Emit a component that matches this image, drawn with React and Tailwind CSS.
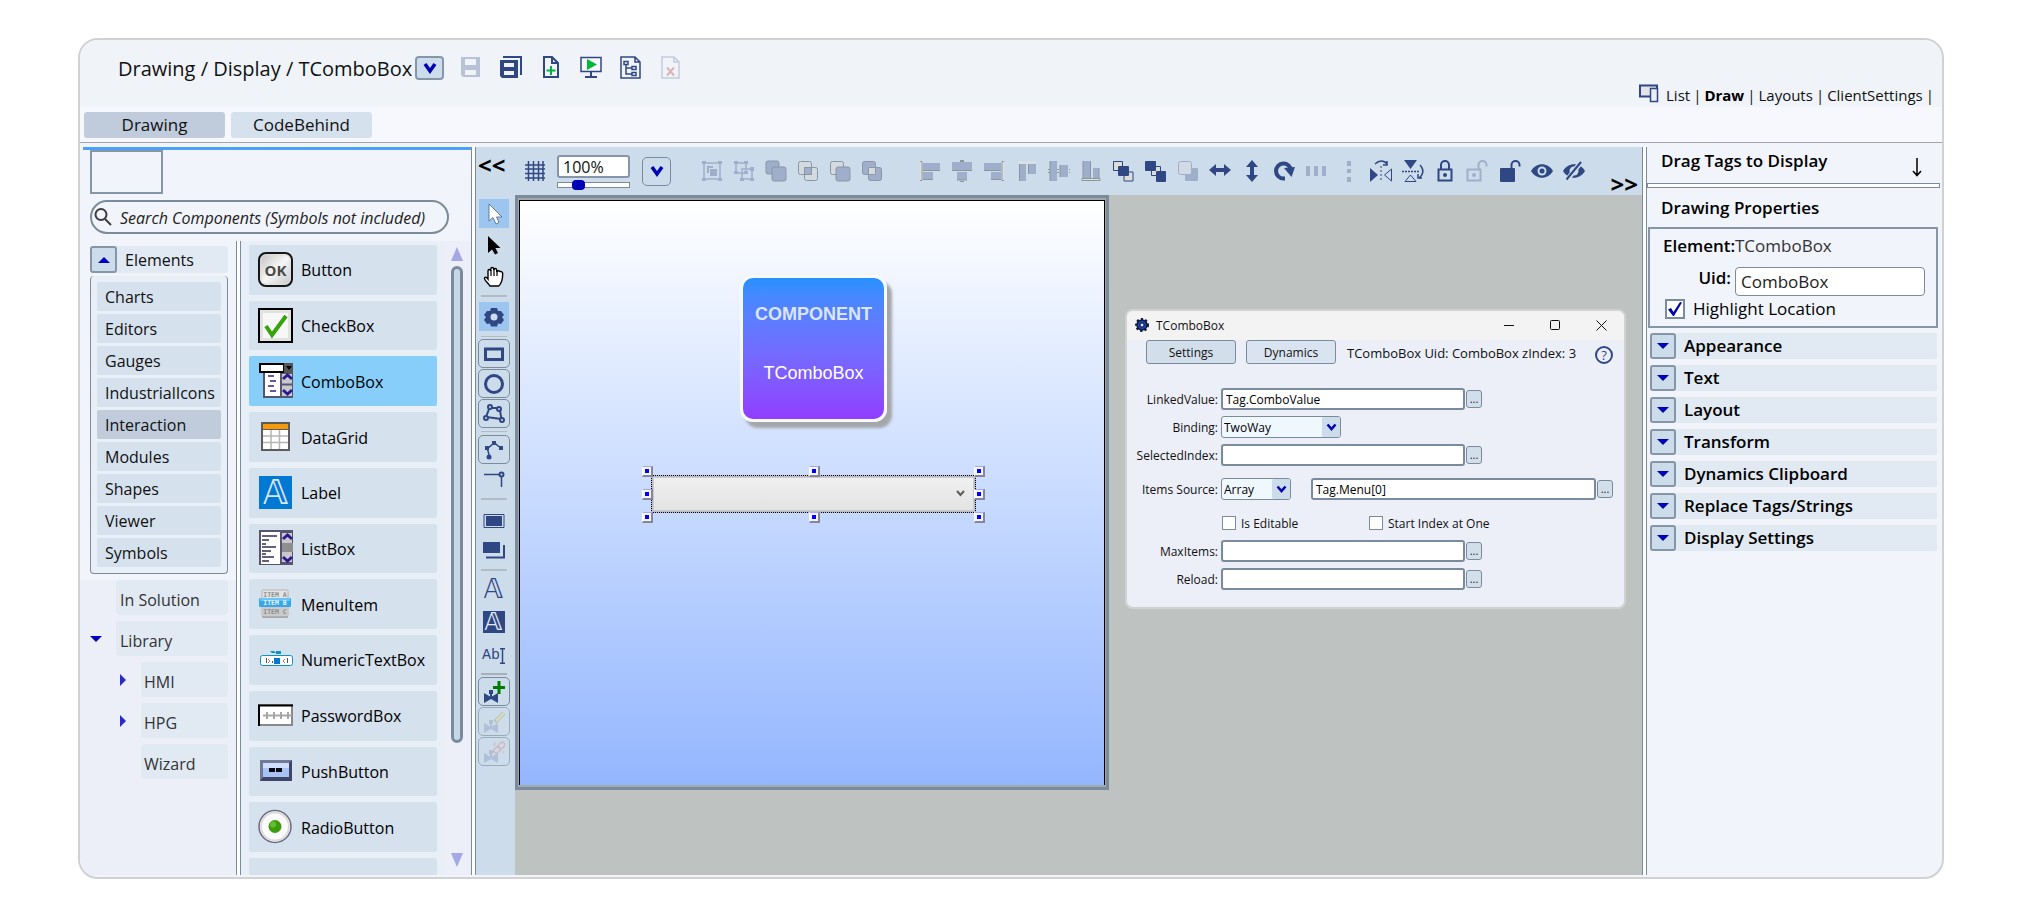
import React, { useState } from 'react';

const navy = '#2f4783';
const dim = '#9fafcb';

function Svg({ w = 22, h = 22, label, className = '', children }) {
    return (
        <svg width={w} height={h} viewBox={`0 0 ${w} ${h}`} fill="none" className={`shrink-0 ${className}`} role={label ? 'img' : undefined} aria-label={label} aria-hidden={label ? undefined : true}>
            {children}
        </svg>
    );
}

function Chevron({ className = '' }) {
    return (
        <Svg w={14} h={12} className={className}>
            <path d="M2 2l5 7 5-7" stroke="#0000b4" strokeWidth="3.500" />
        </Svg>
    );
}

function Valve({ color }) {
    return <path d="M1 13l6 3.500V14H6v-4h4v4H9v2.500l6-3.500v10l-7-4-7 4z" fill={color} />;
}

/* ---------- header icons ---------- */

const headerActions = [
    {
        name: 'Save',
        icon: (
            <Svg w={22} h={24}>
                <path d="M1 2h19v20H3l-2-2zM5 4v6h11V4zM5 15v5h11v-5z" fill="#b8c2d6" fillRule="evenodd" />
            </Svg>
        ),
    },
    {
        name: 'Save all',
        icon: (
            <Svg w={22} h={24}>
                <path d="M3 2h18v18" stroke={navy} strokeWidth="2" />
                <path d="M0 5h18v18H2l-2-2zM4 8v4h10V8zM4 16v4h10v-4z" fill={navy} fillRule="evenodd" />
            </Svg>
        ),
    },
    {
        name: 'New document',
        icon: (
            <Svg w={22} h={24}>
                <path d="M4 2h8l6 6v14H4z M12 2v6h6" stroke={navy} strokeWidth="2" />
                <path d="M11 11v9M6.500 15.500h9" stroke="#00b33c" strokeWidth="2" />
            </Svg>
        ),
    },
    {
        name: 'Run display',
        icon: (
            <Svg w={22} h={24}>
                <path d="M1 2.500h20v14H1z" stroke={navy} strokeWidth="1.500" fill="#f6f8fc" />
                <path d="M7 4l10 5.500L7 15z" fill="#00b83a" />
                <path d="M11 17v4M5 22h12" stroke={navy} strokeWidth="2" />
            </Svg>
        ),
    },
    {
        name: 'Object tree',
        icon: (
            <Svg w={22} h={24}>
                <path d="M1 2h14l5 5v16H1z M15 2v5h5" stroke={navy} strokeWidth="1.500" />
                <path d="M4 6.500h4v3H4zM12 11.500h4v3h-4zM12 17.500h4v3h-4zM6 10v9h6M6 13h6" stroke={navy} strokeWidth="1.500" />
            </Svg>
        ),
    },
    {
        name: 'Delete document',
        icon: (
            <Svg w={22} h={24}>
                <path d="M2 2h12l5 5v16H2z M14 2v5h5" stroke="#c3cbdc" strokeWidth="1.500" />
                <path d="M7 12.500l7 8M14 12.500l-7 8" stroke="#dfb0b8" strokeWidth="2" />
            </Svg>
        ),
    },
];

/* ---------- top toolbar icons ---------- */

const overlap = '#8a96a6';
const booleanTools = [
    {
        name: 'Group',
        icon: (
            <>
                <path d="M3 3h16v16H3z" stroke={dim} strokeWidth="1.500" />
                <path d="M1 1h4v3H1zM17 1h4v3h-4zM1 18h4v3H1zM17 18h4v3h-4z" fill={dim} />
                <path d="M6 6h6v2H8v5H6zM9 9h7v7H9z" fill={dim} />
            </>
        ),
    },
    {
        name: 'Ungroup',
        icon: (
            <>
                <path d="M3 3h10v10H3zM9 9h10v10H9z" stroke={dim} strokeWidth="1.500" />
                <path d="M1 1h4v3H1zM11 1h4v3h-4zM1 11h4v3H1zM17 7h4v4h-4zM7 18h4v3H7zM17 18h4v3h-4zM11 11h4v3h-4z" fill={dim} />
            </>
        ),
    },
    {
        name: 'Union',
        icon: (
            <>
                <rect x="1" y="1" width="13" height="13" rx="2" fill={dim} stroke={overlap} />
                <rect x="7" y="7" width="14" height="14" rx="2" fill={dim} stroke={overlap} />
            </>
        ),
    },
    {
        name: 'Intersect',
        icon: (
            <>
                <rect x="1.500" y="1.500" width="13" height="13" rx="2" fill="#d3dae0" stroke={overlap} />
                <rect x="7.500" y="7.500" width="13" height="13" rx="2" fill="#d3dae0" stroke={overlap} />
                <rect x="7.500" y="7.500" width="7" height="7" fill={dim} stroke={overlap} />
            </>
        ),
    },
    {
        name: 'Exclude',
        icon: (
            <>
                <rect x="1.500" y="1.500" width="13" height="13" rx="2" fill="#d3dae0" stroke={overlap} />
                <rect x="7" y="7" width="14" height="14" rx="2" fill={dim} stroke={overlap} />
            </>
        ),
    },
    {
        name: 'Xor',
        icon: (
            <>
                <rect x="1.500" y="1.500" width="13" height="13" rx="2" fill={dim} stroke={overlap} />
                <rect x="7.500" y="7.500" width="13" height="13" rx="2" fill={dim} stroke={overlap} />
                <rect x="7.500" y="7.500" width="7" height="7" rx="1" fill="#d3dae0" stroke={overlap} />
            </>
        ),
    },
];

const arrangeTools = [
    {
        name: 'Align left',
        icon: (
            <>
                <path d="M1 1.500h2v19H1" stroke="#8b9698" fill="#dde1e4" />
                <path d="M4 3h17v7H4zM4 12h10v7H4z" fill={dim} />
                <path d="M4 10.500h17M4 19.500h10" stroke="#8b9698" />
            </>
        ),
    },
    {
        name: 'Align center',
        icon: (
            <>
                <path d="M11 0v22" stroke="#8b9698" strokeWidth="4" strokeDasharray="2 1" />
                <path d="M1 2h20v8H1zM6 12h10v8H6z" fill={dim} />
                <path d="M1 10.500h20M6 20h10" stroke="#8b9698" />
            </>
        ),
    },
    {
        name: 'Align right',
        icon: (
            <>
                <path d="M21 1.500h-2v19h2" stroke="#8b9698" fill="#dde1e4" />
                <path d="M1 3h17v7H1zM8 12h10v7H8z" fill={dim} />
                <path d="M1 10.500h17M8 19.500h10" stroke="#8b9698" />
            </>
        ),
    },
    {
        name: 'Align top',
        icon: (
            <>
                <path d="M2 1.500h18v2H2z" fill="#dde1e4" />
                <path d="M4 4h6v17H4zM13 4h7v10h-7z" fill={dim} />
                <path d="M3.500 4v17M12.500 4v10" stroke="#8b9698" />
            </>
        ),
    },
    {
        name: 'Align middle',
        icon: (
            <>
                <path d="M0 9.500h22M0 12.500h22" stroke="#8b9698" strokeDasharray="2 1" />
                <path d="M2 1h7v20H2zM12 5h8v12h-8z" fill={dim} />
                <path d="M2 1v20M12 5v12" stroke="#8b9698" />
            </>
        ),
    },
    {
        name: 'Align bottom',
        icon: (
            <>
                <path d="M2 18.500h18v2H2z" fill="#dde1e4" stroke="#8b9698" />
                <path d="M3 1h7v17H3zM13 8h6v10h-6z" fill={dim} />
                <path d="M10.500 1v17M19 8v10M3 1v17" stroke="#8b9698" />
            </>
        ),
    },
    {
        name: 'Bring to front',
        icon: (
            <>
                <path d="M1.500 1.500h9v9h-9zM12 12h9v9h-9z" fill="#dcdcd8" stroke={navy} />
                <rect x="6" y="6" width="11" height="10" rx="1" fill={navy} />
            </>
        ),
    },
    {
        name: 'Send to back',
        icon: (
            <>
                <path d="M7.500 6.500h9v9h-9z" fill="#dcdcd8" stroke={navy} />
                <rect x="1" y="1" width="11" height="10" rx="1" fill={navy} />
                <rect x="12" y="11" width="10" height="11" rx="1" fill={navy} />
            </>
        ),
    },
    {
        name: 'Send backward',
        icon: (
            <>
                <rect x="8" y="8" width="13" height="13" rx="1" fill={dim} />
                <rect x="1.500" y="1.500" width="13" height="13" rx="2" fill="#d3dae3" stroke={dim} />
            </>
        ),
    },
    { name: 'Same width', icon: <path d="M0 10l7-6v4h8V4l7 6-7 6v-4H7v4z" fill={navy} /> },
    { name: 'Same height', icon: <path d="M11 0l6 7h-4v8h4l-6 7-6-7h4V7H5z" fill={navy} /> },
    {
        name: 'Rotate',
        icon: (
            <>
                <path d="M12 18.500h-1.500a7.500 7.500 0 1 1 7.500-8" stroke={navy} strokeWidth="4" />
                <path d="M11 8l11-1-3.500 10z" fill={navy} />
            </>
        ),
    },
    { name: 'Space horizontally', icon: <path d="M1 6h4v10H1zM9 6h4v10H9zM17 6h4v10h-4z" fill={dim} /> },
    { name: 'Space vertically', icon: <path d="M9 1h4v5H9zM9 9h4v4H9zM9 17h4v5H9z" fill={dim} /> },
    {
        name: 'Flip horizontally',
        icon: (
            <>
                <path d="M11 6v16" stroke={navy} strokeDasharray="2 2" />
                <path d="M0 8l8 7-8 7z" fill={navy} />
                <path d="M21.500 9v12L14.500 15z" stroke={navy} />
                <path d="M5 4c4-4 9-4 12 0M17 1v4h-4" stroke={navy} strokeWidth="1.500" />
            </>
        ),
    },
    {
        name: 'Flip vertically',
        icon: (
            <>
                <path d="M0 11.500h17" stroke={navy} strokeWidth="1.500" strokeDasharray="2 1" />
                <path d="M2 0h13L8.500 9z" fill={navy} />
                <path d="M3 21.500h11L8.500 15z" stroke={navy} />
                <path d="M18 5c4 4 4 9-1 13M16 14v4h4" stroke={navy} strokeWidth="1.500" />
            </>
        ),
    },
    {
        name: 'Lock',
        icon: (
            <>
                <path d="M4.500 9.500h13v11h-13z" stroke={navy} strokeWidth="2" />
                <path d="M7 9V5a4 4 0 0 1 8 0v4" stroke={navy} strokeWidth="2" />
                <circle cx="11" cy="15" r="2" fill={navy} />
            </>
        ),
    },
    {
        name: 'Unlock',
        icon: (
            <>
                <path d="M1.500 9.500h13v11h-13z" stroke={dim} strokeWidth="2" />
                <path d="M12.500 9V5a4 4 0 0 1 8 0v1.500" stroke={dim} strokeWidth="2" />
                <circle cx="8" cy="15" r="2" fill={dim} />
            </>
        ),
    },
    {
        name: 'Unlock all',
        icon: (
            <>
                <rect x="1" y="8" width="15" height="14" rx="1" fill={navy} />
                <path d="M12.500 9V5a4 4 0 0 1 8 0v1.500" stroke={navy} strokeWidth="2" />
            </>
        ),
    },
    {
        name: 'Show',
        icon: (
            <>
                <path d="M0 11c5-9 17-9 22 0-5 9-17 9-22 0z" fill={navy} />
                <circle cx="11" cy="11" r="4.500" fill="#cddceb" />
                <circle cx="11" cy="11" r="2.500" fill={navy} />
            </>
        ),
    },
    {
        name: 'Hide',
        icon: (
            <>
                <path d="M0 11c5-9 17-9 22 0-5 9-17 9-22 0z" fill={navy} />
                <circle cx="11" cy="11" r="4.500" fill="#cddceb" />
                <path d="M4 20L18 2" stroke="#cddceb" strokeWidth="5" />
                <path d="M3.500 19.500L18 2" stroke={navy} strokeWidth="2" />
            </>
        ),
    },
];

/* ---------- component palette icons ---------- */

const palette = [
    {
        name: 'Button',
        icon: (
            <Svg w={35} h={35}>
                <defs>
                    <linearGradient id="metal" x1="0" y1="0" x2="1" y2="1">
                        <stop offset="0" stopColor="#bdbdbd" />
                        <stop offset=".5" stopColor="#f6f6f6" />
                        <stop offset="1" stopColor="#c4c4c4" />
                    </linearGradient>
                </defs>
                <rect x="1" y="1" width="33" height="33" rx="7" fill="url(#metal)" stroke="#161616" strokeWidth="2" />
                <rect x="3" y="3" width="29" height="29" rx="5" stroke="#dedede" />
                <text x="17.500" y="23.500" textAnchor="middle" fontFamily="Open Sans" fontWeight="700" fontSize="15" fill="#4a4a4a">OK</text>
            </Svg>
        ),
    },
    {
        name: 'CheckBox',
        icon: (
            <Svg w={35} h={35}>
                <rect x="1" y="1" width="33" height="33" fill="#e2e2e2" stroke="#000" strokeWidth="2" />
                <path d="M5 5h25v25H5z" fill="#f7f7f7" />
                <path d="M8 18l6 9L28 8" stroke="#36a20c" strokeWidth="4" />
            </Svg>
        ),
    },
    {
        name: 'ComboBox',
        icon: (
            <Svg w={35} h={35}>
                <path d="M6 9h18v25H6z" fill="#fff" stroke="#57546e" strokeWidth="2" />
                <path d="M23 10h12v24H23z" fill="#c9c9cd" stroke="#57546e" strokeWidth="2" />
                <path d="M23 21.500h12" stroke="#57546e" strokeWidth="2" />
                <path d="M25 16l4.500-4 4.500 4M25 27l4.500 4 4.500-4" stroke="#2c1a8c" strokeWidth="3" />
                <path d="M10 13h6M12 18h6M10 23h6M12 28h6" stroke="#6557a4" strokeWidth="2" />
                <path d="M2 1h24v8H2z" fill="#fff" stroke="#000" strokeWidth="2" />
                <path d="M26 0h9v10h-9z" fill="#555" />
                <path d="M28 3h6l-3 4z" fill="#000" />
            </Svg>
        ),
    },
    {
        name: 'DataGrid',
        icon: (
            <Svg w={35} h={35}>
                <path d="M4 4h27v27H4z" fill="#fff" stroke="#5c5c5c" strokeWidth="2" />
                <path d="M5 5h25v5H5z" fill="#f79a0a" />
                <path d="M5 10.500h25" stroke="#5c5c5c" />
                <path d="M13 11v19M21.500 11v19M5 17h25M5 23.500h25" stroke="#b5b5b5" strokeWidth="1.500" />
            </Svg>
        ),
    },
    {
        name: 'Label',
        icon: (
            <span aria-hidden="true" className="flex size-[33px] items-center justify-center bg-[#0078d4] font-['DejaVu_Sans',sans-serif] text-[34px] leading-none text-[#dbe6f5]">𝔸</span>
        ),
    },
    {
        name: 'ListBox',
        icon: (
            <Svg w={35} h={35}>
                <path d="M2 1h33v34H2z" fill="#fff" stroke="#57546e" strokeWidth="2" />
                <path d="M23 2h12v31H23z" fill="#c9c9cd" stroke="#57546e" strokeWidth="2" />
                <path d="M24 13h11v9H24z" fill="#8e8e8e" />
                <path d="M25 9l4.500-4L34 9M25 27l4.500 4 4.500-4" stroke="#2c1a8c" strokeWidth="3" />
                <path d="M4 6h15M4 10h7M4 14h4M4 17h14M4 21h9M4 24h4M4 27h12M4 31h7" stroke="#65617a" strokeWidth="2" />
            </Svg>
        ),
    },
    {
        name: 'MenuItem',
        icon: (
            <Svg w={35} h={35}>
                <rect x="4" y="6" width="26" height="26" rx="1" fill="#a8a8a8" />
                <rect x="4" y="4" width="26" height="26" rx="1" fill="#e4e4e4" stroke="#b4b4b4" />
                <rect x="4" y="21" width="26" height="9" fill="#cacaca" />
                <rect x="1" y="12" width="32" height="9" rx="1" fill="#37a7ea" />
                <rect x="2" y="12" width="30" height="3" fill="#6cc4f6" />
                <g fontFamily="DejaVu Sans Mono" fontWeight="700" fontSize="6.500" textAnchor="middle">
                    <text x="17" y="11" fill="#8d8d8d">ITEM A</text>
                    <text x="17" y="19" fill="#e4f4ff">ITEM B</text>
                    <text x="17" y="28" fill="#8d8d8d">ITEM C</text>
                </g>
            </Svg>
        ),
    },
    {
        name: 'NumericTextBox',
        icon: (
            <Svg w={35} h={35}>
                <rect x="2.500" y="13.500" width="32" height="10" rx="2" fill="#fff" stroke="#0a93c4" />
                <path d="M12 9h4l2 2h-4zM18 9h5v3h-5z" fill="#0a93c4" />
                <path d="M16 16h6v6h-6z" fill="#0078d4" />
                <path d="M8.500 16v5M14.500 19v2M29.500 16v5" stroke="#555" />
                <path d="M10 17l2 2-2 2M27 17l-2 2 2 2" stroke="#888" />
            </Svg>
        ),
    },
    {
        name: 'PasswordBox',
        icon: (
            <Svg w={35} h={35}>
                <path d="M1 7h33v20H1z" fill="#fff" stroke="#8a8a8a" strokeWidth="2" />
                <path d="M1 28V7.500H35" stroke="#000" strokeWidth="2" />
                <path d="M5 17.500h29" stroke="#a6a6a6" strokeWidth="2" />
                <path d="M9 14v7M16 14v7M23 14v7M30 14v7" stroke="#a6a6a6" strokeWidth="2" />
            </Svg>
        ),
    },
    {
        name: 'PushButton',
        icon: (
            <Svg w={35} h={35}>
                <path d="M2 7h32v21H2z" fill="#3e4569" />
                <path d="M2 7h32l-3 3H5v14l-3 4z" fill="#73789b" />
                <path d="M5 10h26v14H5z" fill="#a9c2f6" />
                <path d="M5 10h26v5H5z" fill="#d0defb" />
                <path d="M11 15h6v4h-6zM18 15h6v4h-6z" fill="#0a0a14" />
            </Svg>
        ),
    },
    {
        name: 'RadioButton',
        icon: (
            <Svg w={35} h={35}>
                <circle cx="17" cy="17.500" r="16" fill="#fbfbfb" stroke="#6b6b80" strokeWidth="1.500" />
                <circle cx="17" cy="17.500" r="14" stroke="#dcdcdc" strokeWidth="2" />
                <circle cx="17" cy="17.500" r="6.500" fill="#3c9c0c" />
                <circle cx="15" cy="15.500" r="3" fill="#62bf30" />
            </Svg>
        ),
    },
];

const categories = ['Charts', 'Editors', 'Gauges', 'IndustrialIcons', 'Interaction', 'Modules', 'Shapes', 'Viewer', 'Symbols'];

const sections = ['Appearance', 'Text', 'Layout', 'Transform', 'Dynamics Clipboard', 'Replace Tags/Strings', 'Display Settings'];

/* ---------- header ---------- */

function Header() {
    return (
        <header>
            <div className="flex h-[67px] bg-[#f0f4f9] pl-[38px]">
                <div className="flex h-14 items-center">
                    <h1 className="w-[297px] pt-px whitespace-nowrap text-[20px] text-[#111]">Drawing / Display / TComboBox</h1>
                    <button type="button" aria-label="Choose display" className="flex h-6 w-[29px] items-center justify-center rounded border-2 border-[#8496a8] bg-[#cddceb]">
                        <Chevron />
                    </button>
                    <div className="ml-4 flex gap-[18px] pb-[2px]">
                        {headerActions.map(a => (
                            <button key={a.name} type="button" aria-label={a.name}>{a.icon}</button>
                        ))}
                    </div>
                </div>
                <nav className="ml-auto flex items-center gap-[3px] self-end pr-2 text-[15px] leading-4 whitespace-nowrap text-[#111]">
                    <Svg w={20} h={20} className="mb-1 mr-1">
                        <path d="M1 2.500h17v11H1z" stroke={navy} strokeWidth="2" fill="#e2e4e8" />
                        <path d="M11.500 5.500h7v13h-7z" stroke={navy} strokeWidth="1.500" fill="#eceef2" />
                    </Svg>
                    <a href="#list">List</a>
                    <span>|</span>
                    <a href="#draw" className="font-bold text-black">Draw</a>
                    <span>|</span>
                    <a href="#layouts">Layouts</a>
                    <span>|</span>
                    <a href="#client">ClientSettings</a>
                    <span>|</span>
                </nav>
            </div>
            <div className="flex h-9 items-center gap-[6px] border-b border-[#a3a6a9] bg-[#f6f8fd] pl-1 text-[17px]">
                <button type="button" className="h-[26px] w-[141px] rounded-[3px] bg-[#c0ccdb] leading-[26px]">Drawing</button>
                <button type="button" className="h-[26px] w-[141px] rounded-[3px] bg-[#d6e1ee] leading-[26px]">CodeBehind</button>
            </div>
        </header>
    );
}

/* ---------- left panel ---------- */

function Splitter() {
    return <div className="w-[5px] shrink-0 border-x border-[#7a8b9c] bg-white" />;
}

function Triangle({ dir, className = '' }) {
    const paths = { up: 'M0 6L6 0l6 6z', down: 'M0 0h12L6 6z' };
    return (
        <Svg w={12} h={6} className={className}>
            <path d={paths[dir]} fill="#0000c0" />
        </Svg>
    );
}

function Tree({ category, onSelect }) {
    return (
        <div className="flex w-[156px] shrink-0 flex-col text-[16px] whitespace-nowrap">
            <div className="pl-[10px] pr-2 pt-[5px]">
                <div className="flex items-center rounded-[3px] bg-[#e1e9f3]">
                    <button type="button" aria-label="Collapse elements" className="flex size-[27px] items-center justify-center rounded-[3px] border-2 border-[#8496a8] bg-[#cddceb]">
                        <Triangle dir="up" />
                    </button>
                    <span className="pl-2 leading-6">Elements</span>
                </div>
                <ul className="mt-[3px] flex flex-col gap-[3px] rounded-[4px] border border-t-0 border-[#7a8b9c] bg-[#e8eff7] px-[6px] py-[6px]">
                    {categories.map(c => (
                        <li key={c}>
                            <button
                                type="button"
                                onClick={() => onSelect(c)}
                                className={`h-[29px] w-full rounded-[2px] pl-2 text-left leading-[30px] ${c === category ? 'bg-[#c0ccdb]' : 'bg-[#d6e1ee]'}`}
                            >
                                {c}
                            </button>
                        </li>
                    ))}
                </ul>
            </div>
            <ul className="mt-[6px] flex flex-1 flex-col gap-[6px] bg-[#eceff8] pr-2 text-[#333] *:flex *:items-center">
                <li className="pl-9">
                    <a href="#solution" className="h-[35px] flex-1 rounded-[4px] bg-[#e1e9f3] pl-1 leading-10">In Solution</a>
                </li>
                <li className="pl-[10px]">
                    <Triangle dir="down" className="mr-[14px]" />
                    <a href="#library" className="h-[35px] flex-1 rounded-[4px] bg-[#e1e9f3] pl-1 leading-10">Library</a>
                </li>
                {['HMI', 'HPG'].map(n => (
                    <li key={n} className="pl-10">
                        <Svg w={6} h={12} className="mr-[15px]">
                            <path d="M0 0l6 6-6 6z" fill="#2a2ac8" />
                        </Svg>
                        <a href={`#${n}`} className="h-[35px] flex-1 rounded-[4px] bg-[#e1e9f3] pl-[3px] leading-10">{n}</a>
                    </li>
                ))}
                <li className="pl-[61px]">
                    <a href="#wizard" className="h-[35px] flex-1 rounded-[4px] bg-[#e1e9f3] pl-[3px] leading-10">Wizard</a>
                </li>
            </ul>
        </div>
    );
}

function ComponentPanel() {
    const [category, setCategory] = useState('Interaction');
    const [selected, setSelected] = useState('ComboBox');

    return (
        <aside className="flex w-[391px] shrink-0 flex-col">
            <div className="ml-[3px] h-[3px] shrink-0 bg-[#4aa0fb]" />
            <div className="ml-[10px] h-11 w-[73px] shrink-0 border-2 border-[#8496a8]" />
            <label className="ml-[10px] mr-[22px] mt-[6px] flex h-[34px] shrink-0 items-center rounded-[17px] border-2 border-[#7a8b9c] pl-[2px]">
                <Svg w={18} h={20}>
                    <circle cx="7" cy="7.500" r="5.500" stroke="#3c3c3c" strokeWidth="2" />
                    <path d="M11 12l6 6" stroke="#3c3c3c" strokeWidth="2" />
                </Svg>
                <input type="text" aria-label="Search components" placeholder="Search Components (Symbols not included)" className="ml-2 min-w-0 flex-1 bg-transparent pt-px text-[16px] italic outline-none placeholder:text-[#222]" />
            </label>
            <div className="mt-[7px] flex min-h-0 flex-1">
                <Tree category={category} onSelect={setCategory} />
                <Splitter />
                <ul className="grid flex-1 grid-rows-[repeat(11,minmax(0,1fr))_17px] gap-y-[6px] bg-[#e8eff7] pl-2 pr-[7px] pt-1">
                    {palette.map(p => (
                        <li key={p.name}>
                            <button
                                type="button"
                                onClick={() => setSelected(p.name)}
                                className={`flex h-full w-full items-center rounded-[2px] pb-px pl-[9px] text-[16px] text-black ${p.name === selected ? 'bg-[#87cefa]' : 'bg-[#d6e1ee]'}`}
                            >
                                <span className="flex w-[35px] justify-center">{p.icon}</span>
                                <span className="ml-2 mt-[2px]">{p.name}</span>
                            </button>
                        </li>
                    ))}
                    <li className="rounded-[2px] bg-[#d6e1ee]" />
                </ul>
                <div className="flex w-[27px] shrink-0 flex-col items-center bg-[#eceff8] pb-2 pr-[2px] pt-[6px]">
                    <Svg w={12} h={14}>
                        <path d="M6 0l6 14H0z" fill="#a6a8e6" />
                    </Svg>
                    <div className="mt-[5px] h-[77%] w-3 rounded-full border-[3px] border-[#7a8b9c] bg-[#c6d7e8]" />
                    <Svg w={12} h={14} className="mt-auto">
                        <path d="M6 14L0 0h12z" fill="#a6a8e6" />
                    </Svg>
                </div>
            </div>
        </aside>
    );
}

/* ---------- drawing area ---------- */

function TopToolbar() {
    const [zoom, setZoom] = useState(24);

    return (
        <div className="flex h-12 shrink-0 items-center bg-[#cddceb]">
            <button type="button" aria-label="Collapse left panel" className="w-[49px] self-start pl-[2px] text-left text-[24px] font-bold leading-9 text-black">&lt;&lt;</button>
            <button type="button" aria-label="Toggle grid" className="mr-3">
                <Svg w={20} h={20}>
                    <path d="M3.500 0v20M8.500 0v20M13.500 0v20M18 0v20M0 4h20M0 8h20M0 12.500h20M0 17h20" stroke={navy} strokeWidth="1.500" />
                </Svg>
            </button>
            <div className="mr-3 flex w-[73px] flex-col gap-1 pt-px">
                <input type="text" aria-label="Zoom" defaultValue="100%" className="h-[23px] w-full rounded-[3px] border-2 border-[#8496a8] bg-white px-1 text-[16px] leading-5" />
                <input
                    type="range"
                    aria-label="Zoom level"
                    value={zoom}
                    onChange={e => setZoom(e.target.value)}
                    className="h-[6px] w-full appearance-none border border-[#7a8b9c] bg-white [&::-webkit-slider-thumb]:h-[10px] [&::-webkit-slider-thumb]:w-[13px] [&::-webkit-slider-thumb]:appearance-none [&::-webkit-slider-thumb]:rounded-[4px] [&::-webkit-slider-thumb]:bg-[#0000b8]"
                />
            </div>
            <button type="button" aria-label="Zoom presets" className="flex h-[29px] w-[29px] items-center justify-center rounded-[5px] border border-[#7a8b9c] bg-[#cddceb]">
                <Chevron />
            </button>
            <div className="ml-[25px] flex">
                {booleanTools.map(t => (
                    <button key={t.name} type="button" aria-label={t.name} className="flex w-8 justify-center">
                        <Svg>{t.icon}</Svg>
                    </button>
                ))}
            </div>
            <div className="ml-[26px] grid w-[676px] grid-flow-col auto-cols-fr">
                {arrangeTools.map(t => (
                    <button key={t.name} type="button" aria-label={t.name} className="flex justify-center">
                        <Svg>{t.icon}</Svg>
                    </button>
                ))}
            </div>
            <button type="button" aria-label="Collapse right panel" className="ml-auto self-end pr-1 text-[24px] font-bold leading-[22px] text-black">&gt;&gt;</button>
        </div>
    );
}

function Tool({ name, active, boxed, faded, children }) {
    let look = 'h-[30px] w-[30px]';
    if (active) look = 'h-[29px] w-[30px] bg-[#9cc5f0]';
    if (boxed) look = 'mb-px h-[29px] w-8 rounded-[5px] border border-[#7a8b9c]';
    return (
        <button type="button" aria-label={name} className={`flex shrink-0 items-center justify-center ${look} ${faded ? 'opacity-60' : ''}`}>
            {children}
        </button>
    );
}

function Separator() {
    return <div className="my-[3px] h-[2px] w-[26px] shrink-0 bg-[#b3bcc5]" />;
}

function ToolColumn() {
    return (
        <div className="flex w-[39px] shrink-0 flex-col items-center bg-[#cddceb] pr-1 pt-1">
            <Tool name="Select" active>
                <Svg>
                    <path d="M6 1v17l4-3.500 3 6.500 3-1.500-2.500-5.500h5.500z" fill="#fff" stroke="#4d6280" strokeWidth=".8" />
                </Svg>
            </Tool>
            <div className="h-[2px] shrink-0" />
            <Tool name="Direct select">
                <Svg>
                    <path d="M5 2v17l4-3.500 3 5 3-1.500-2.500-5h5z" fill="#000" />
                </Svg>
            </Tool>
            <div className="h-[2px] shrink-0" />
            <Tool name="Pan">
                <Svg>
                    <path d="M7 20c-2-3-6-6-5.500-8 .5-1.500 2.500-.5 3.500 1V5c0-2 2.500-2 2.700 0V3c.3-2 2.700-2 3 0v1c.3-2 2.800-2 3 0v2c.5-2 3-1.500 3 0 .5-1 3-.5 3 1.500 0 5-.5 9.500-4 12.500z" fill="#fff" stroke="#000" strokeWidth="1.400" />
                    <path d="M8 4v6M11 3v7M14 4v6" stroke="#000" strokeWidth="1.200" />
                </Svg>
            </Tool>
            <Separator />
            <div className="h-[2px] shrink-0" />
            <Tool name="Settings" active>
                <Svg>
                    <path d="M8 2h6l1 3 3 0 3 4-2 2 2 3-3 4-3-.5-1 3H8l-1-3-3 .5-3-4 2-3-2-2 3-4 3 0z" fill={navy} />
                    <circle cx="11" cy="11" r="3.500" fill="#cddceb" />
                </Svg>
            </Tool>
            <div className="mb-[2px] mt-[5px] h-px w-[26px] shrink-0 bg-[#b3bcc5]" />
            <Tool name="Rectangle" boxed>
                <Svg>
                    <path d="M2.500 6h17v10.500h-17z" stroke={navy} strokeWidth="3" />
                </Svg>
            </Tool>
            <Tool name="Ellipse" boxed>
                <Svg>
                    <circle cx="11" cy="11" r="8.500" stroke={navy} strokeWidth="3" />
                </Svg>
            </Tool>
            <Tool name="Polygon" boxed>
                <Svg>
                    <path d="M6.500 5h10l2 11L3 14z" stroke={navy} strokeWidth="2" />
                    <g fill="#cddceb" stroke={navy} strokeWidth="2">
                        <circle cx="7" cy="4" r="2" />
                        <circle cx="16" cy="6" r="2" />
                        <circle cx="3" cy="15" r="2" />
                        <circle cx="19" cy="17" r="2" />
                    </g>
                </Svg>
            </Tool>
            <div className="mb-[3px] mt-[2px] h-px w-[26px] shrink-0 bg-[#b3bcc5]" />
            <Tool name="Path" boxed>
                <Svg>
                    <path d="M6 18c0-5-1-6-2-9M4 9c4-1 5-4 7-5 3 1 4 4 8 5" stroke={navy} strokeWidth="1.500" />
                    <path d="M2 7h4v4H2zM9 2h4v4H9zM16 7h4v4h-4z" fill={navy} />
                    <circle cx="6" cy="18" r="2.500" fill={navy} />
                </Svg>
            </Tool>
            <Tool name="Line">
                <Svg>
                    <path d="M1 5.500h16M18.500 8v10" stroke={navy} strokeWidth="1.500" />
                    <circle cx="18.500" cy="5.500" r="2" stroke={navy} strokeWidth="2" />
                </Svg>
            </Tool>
            <Separator />
            <div className="h-[3px] shrink-0" />
            <Tool name="Glow rectangle">
                <Svg>
                    <path d="M1 4.500h20v13H1z" stroke={navy} />
                    <path d="M3 6h16v10H3z" fill={navy} />
                </Svg>
            </Tool>
            <Tool name="Shadow rectangle">
                <Svg>
                    <path d="M0 2h17v11H0z" fill={navy} />
                    <path d="M3 17.500h18V5" stroke={navy} strokeWidth="2" />
                </Svg>
            </Tool>
            <Separator />
            <Tool name="Text">
                <span className="font-['DejaVu_Sans',sans-serif] text-[26px] leading-none text-[#2f4783]">𝔸</span>
            </Tool>
            <div className="h-[3px] shrink-0" />
            <Tool name="Filled text">
                <span className="flex size-[22px] items-center justify-center bg-[#2f4783] font-['DejaVu_Sans',sans-serif] text-[24px] leading-none text-[#e3ebf5]">𝔸</span>
            </Tool>
            <div className="h-1 shrink-0" />
            <Tool name="Text box">
                <span className="font-['Liberation_Mono',monospace] text-[15px] text-[#2f4783]">Ab</span>
                <Svg w={5} h={16}>
                    <path d="M0 .8h5M0 15.200h5M2.500 1v14" stroke={navy} strokeWidth="1.500" />
                </Svg>
            </Tool>
            <div className="my-[2px] h-[2px] w-[26px] shrink-0 bg-[#a8b0b8]" />
            <Tool name="Add symbol" boxed>
                <Svg h={24}>
                    <Valve color={navy} />
                    <path d="M16 1v13M10 7.500h12" stroke="#007a00" strokeWidth="3" />
                </Svg>
            </Tool>
            <Tool name="Edit symbol" boxed faded>
                <Svg h={24}>
                    <Valve color={dim} />
                    <path d="M12 12l9-9" stroke="#a4a79a" strokeWidth="4" />
                    <path d="M13 11l8-8" stroke="#e2dc9a" strokeWidth="2.500" />
                </Svg>
            </Tool>
            <Tool name="Unlink symbol" boxed faded>
                <Svg h={24}>
                    <Valve color={dim} />
                    <rect x="-3.500" y="-2.500" width="7" height="5" rx="2.500" stroke="#d8a0a8" strokeWidth="1.500" transform="translate(14 10) rotate(-45)" />
                    <rect x="-3.500" y="-2.500" width="7" height="5" rx="2.500" stroke="#d8a0a8" strokeWidth="1.500" transform="translate(18.500 5.500) rotate(-45)" />
                    <path d="M12 2v3M20 11v2M10 5h2" stroke="#d8a0a8" />
                </Svg>
            </Tool>
        </div>
    );
}

const handles = [
    'left-[-10px] top-[-10px]',
    'left-1/2 -ml-[5px] top-[-10px]',
    'right-[-10px] top-[-10px]',
    'left-[-10px] top-[13px]',
    'right-[-10px] top-[13px]',
    'left-[-10px] bottom-[-11px]',
    'left-1/2 -ml-[5px] bottom-[-11px]',
    'right-[-10px] bottom-[-11px]',
];

function Canvas() {
    return (
        <div className="relative h-[595px] w-[594px] border-[3px] border-[#7a8b9c] bg-[#a2a8ab] px-px pb-[2px] pt-[2px]">
            <div className="h-full border border-b-0 border-black bg-linear-to-b from-white to-[#94b6ff]" />
            <div className="absolute left-[222px] top-[77px] flex size-[147px] flex-col items-center rounded-[13px] border-[3px] border-[#f6f9ff] bg-linear-to-b from-[#2691ff] to-[#903cff] pt-6 font-['Liberation_Sans',Arial,sans-serif] text-[18px] leading-6 shadow-[5px_6px_3px_#a4a6aa]">
                <span className="font-bold text-[#dbe6fd]">COMPONENT</span>
                <span className="mt-[35px] text-white">TComboBox</span>
            </div>
            <div className="absolute left-[133px] top-[277px] h-[38px] w-[325px] border border-dotted border-black bg-[#b9bcc4] p-px">
                <select aria-label="Combo box" className="size-full appearance-none border border-[#c8cacd] bg-linear-to-b from-[#f0f0f0] to-[#e3e3e3]" />
                <Svg w={9} h={7} className="pointer-events-none absolute right-[10px] top-[14px]">
                    <path d="M1 1l3.500 4L8 1" stroke="#5c5c5c" strokeWidth="2" />
                </Svg>
                {handles.map(h => (
                    <span key={h} className={`absolute flex size-[11px] items-center justify-center border-b-2 border-l border-r-2 border-t border-b-[#85859c] border-l-white border-r-[#85859c] border-t-[#a8a8f4] bg-[#f4f4fa] ${h}`}>
                        <span className="size-1 bg-[#0000ff]" />
                    </span>
                ))}
            </div>
        </div>
    );
}

/* ---------- settings window ---------- */

function Field({ id, label, defaultValue }) {
    return (
        <div className="flex items-center">
            <label htmlFor={id} className="w-[90px] pr-[3px] text-right">{label}</label>
            <input id={id} type="text" defaultValue={defaultValue} className="h-[22px] w-[244px] rounded-[3px] border-2 border-[#7a8b9c] bg-white px-[3px] text-black" />
            <MoreButton />
        </div>
    );
}

function MoreButton() {
    return <button type="button" aria-label="Browse tags" className="ml-px h-[18px] w-4 shrink-0 rounded-[3px] border border-[#7a8b9c] bg-[#d3deeb] text-[11px] leading-4">...</button>;
}

function Dropdown({ id, width, options }) {
    return (
        <span className={`relative flex h-[22px] ${width}`}>
            <select id={id} className="w-full appearance-none rounded-[3px] border border-[#7a8b9c] bg-[#f0f8ff] pl-[2px] text-black">
                {options.map(o => (
                    <option key={o}>{o}</option>
                ))}
            </select>
            <span className="pointer-events-none absolute inset-y-px right-px flex w-[18px] items-center justify-center rounded-[2px] bg-[#cddceb]">
                <Svg w={11} h={8}>
                    <path d="M1.500 1.500l4 4.500 4-4.500" stroke="#0000b4" strokeWidth="2.500" />
                </Svg>
            </span>
        </span>
    );
}

function SettingsWindow() {
    return (
        <section aria-label="TComboBox settings" className="absolute right-4 top-[114px] h-[300px] w-[501px] overflow-hidden rounded-[8px] border-2 border-[#d2d2d2] bg-[#eceff8] text-[12px] text-[#111]">
            <div className="flex h-[29px] items-center bg-[#f3f3f3] pb-px pl-2">
                <Svg w={14} h={14}>
                    <circle cx="7" cy="7" r="5" fill="#1a3fae" stroke="#0e1a3c" strokeWidth="1.500" />
                    <circle cx="7" cy="7" r="6" stroke="#0e1a3c" strokeWidth="2" strokeDasharray="2.200 2.200" />
                    <circle cx="7" cy="7" r="2" fill="#dfe7f8" stroke="#0e1a3c" />
                </Svg>
                <span className="ml-[7px] flex-1">TComboBox</span>
                <div className="flex gap-[35px] pr-[17px]">
                    <button type="button" aria-label="Minimize">
                        <Svg w={11} h={11}>
                            <path d="M0 5.500h10" stroke="#111" />
                        </Svg>
                    </button>
                    <button type="button" aria-label="Maximize">
                        <Svg w={11} h={11}>
                            <rect x=".5" y=".5" width="9" height="9" rx="1" stroke="#111" />
                        </Svg>
                    </button>
                    <button type="button" aria-label="Close">
                        <Svg w={11} h={11}>
                            <path d="M.5.5l10 10M10.500.5l-10 10" stroke="#111" />
                        </Svg>
                    </button>
                </div>
            </div>
            <div className="flex items-start pl-[19px]">
                <button type="button" className="h-6 w-[90px] rounded-[3px] border border-[#7a8b9c] bg-[#d3deeb]">Settings</button>
                <button type="button" className="ml-[10px] h-6 w-[90px] rounded-[3px] border border-[#7a8b9c] bg-[#dae4f0]">Dynamics</button>
                <span className="ml-[11px] flex-1 text-[13px] leading-[26px]">TComboBox Uid: ComboBox zIndex: 3</span>
                <button type="button" aria-label="Help" className="mr-[11px] mt-[6px] flex size-[18px] items-center justify-center rounded-full border-2 border-[#2f4783] text-[13px] leading-none text-[#2f4783]">?</button>
            </div>
            <form className="mt-[22px] flex flex-col gap-[6px]" onSubmit={e => e.preventDefault()}>
                <div className="flex flex-col gap-[6px] pl-1">
                    <Field id="linked" label="LinkedValue:" defaultValue="Tag.ComboValue" />
                    <div className="flex items-center">
                        <label htmlFor="binding" className="w-[90px] pr-[3px] text-right">Binding:</label>
                        <Dropdown id="binding" width="w-[120px]" options={['TwoWay', 'OneWay']} />
                    </div>
                    <Field id="selected" label="SelectedIndex:" defaultValue="" />
                </div>
                <div className="mt-[6px] flex items-center pl-1">
                    <label htmlFor="source" className="w-[90px] pr-[3px] text-right">Items Source:</label>
                    <Dropdown id="source" width="w-[70px]" options={['Array', 'List']} />
                    <input type="text" aria-label="Items source tag" defaultValue="Tag.Menu[0]" className="ml-5 h-[22px] w-[285px] rounded-[3px] border-2 border-[#7a8b9c] bg-white px-[3px] text-black" />
                    <MoreButton />
                </div>
                <div className="mb-[3px] mt-[9px] flex h-4 items-center pl-[95px]">
                    <label className="flex w-[147px] items-center gap-[5px]">
                        <input type="checkbox" className="size-[14px] appearance-none border border-[#7a8b9c] bg-white checked:bg-[#0000b4]" />
                        Is Editable
                    </label>
                    <label className="flex items-center gap-[5px]">
                        <input type="checkbox" className="size-[14px] appearance-none border border-[#7a8b9c] bg-white checked:bg-[#0000b4]" />
                        Start Index at One
                    </label>
                </div>
                <div className="flex flex-col gap-[6px] pl-1">
                    <Field id="max" label="MaxItems:" defaultValue="" />
                    <Field id="reload" label="Reload:" defaultValue="" />
                </div>
            </form>
        </section>
    );
}

function DrawingArea() {
    return (
        <main className="flex min-w-0 flex-1 flex-col">
            <TopToolbar />
            <div className="flex min-h-0 flex-1">
                <ToolColumn />
                <div className="relative flex-1 bg-[#bec3c2]">
                    <Canvas />
                    <SettingsWindow />
                </div>
            </div>
        </main>
    );
}

/* ---------- right panel ---------- */

function PropertiesPanel() {
    return (
        <aside className="w-[295px] shrink-0 text-[17px] text-black">
            <div className="flex h-9 items-center pl-[14px] pr-5">
                <h2 className="mb-2 flex-1 font-semibold">Drag Tags to Display</h2>
                <Svg w={10} h={20} className="mt-1">
                    <path d="M5 1v17M1 14l4 4.500L9 14" stroke="#000" strokeWidth="1.500" />
                </Svg>
            </div>
            <div className="mr-[2px] h-[5px] border border-[#7a8b9c] bg-white" />
            <h2 className="pl-[14px] pt-[7px] leading-[26px] font-semibold">Drawing Properties</h2>
            <div className="ml-px mr-1 mt-[6px] h-[101px] border-2 border-[#8496a8] px-[13px] pt-1">
                <div className="flex leading-[26px]">
                    <span className="w-[68px] text-right font-semibold">Element:</span>
                    <span className="ml-1 text-[#333]">TComboBox</span>
                </div>
                <div className="mt-2 flex">
                    <label htmlFor="uid" className="w-[68px] text-right font-semibold leading-[22px]">Uid:</label>
                    <input id="uid" type="text" defaultValue="ComboBox" className="ml-1 mr-[-2px] h-[29px] min-w-0 flex-1 rounded-[4px] border border-[#7a8b9c] bg-white px-[5px] text-[#222]" />
                </div>
                <label className="relative mt-[3px] flex items-center leading-5">
                    <input type="checkbox" defaultChecked className="peer ml-[2px] size-5 appearance-none border-2 border-[#7a8b9c] bg-white" />
                    <Svg w={16} h={16} className="pointer-events-none absolute left-1 hidden peer-checked:block">
                        <path d="M1 8.500l3-1.500 2.500 4L13 1l2 .5L7 15H6z" fill="#0000b4" />
                    </Svg>
                    <span className="ml-2">Highlight Location</span>
                </label>
            </div>
            <div className="ml-[3px] mr-[5px] mt-[5px] flex flex-col gap-[6px]">
                {sections.map(s => (
                    <div key={s} className="flex items-center rounded-[2px] bg-[#e1e9f2]">
                        <button type="button" aria-label={`Expand ${s}`} className="flex size-[26px] items-center justify-center rounded-[3px] border-2 border-[#8496a8] bg-[#cddceb]">
                            <Triangle dir="down" />
                        </button>
                        <h3 className="pl-2 font-semibold leading-[26px]">{s}</h3>
                    </div>
                ))}
            </div>
        </aside>
    );
}

export default function App() {
    return (
        <div className="h-screen bg-white px-[78px] py-[38px] font-['Open_Sans','Noto_Sans',sans-serif] leading-tight text-[#111]">
            <div className="flex h-full flex-col overflow-hidden rounded-[20px] border-2 border-[#d0d1d3] bg-[#f1f4fa]">
                <Header />
                <div className="mb-[2px] mt-1 flex min-h-0 flex-1">
                    <ComponentPanel />
                    <Splitter />
                    <DrawingArea />
                    <Splitter />
                    <PropertiesPanel />
                </div>
            </div>
        </div>
    );
}
